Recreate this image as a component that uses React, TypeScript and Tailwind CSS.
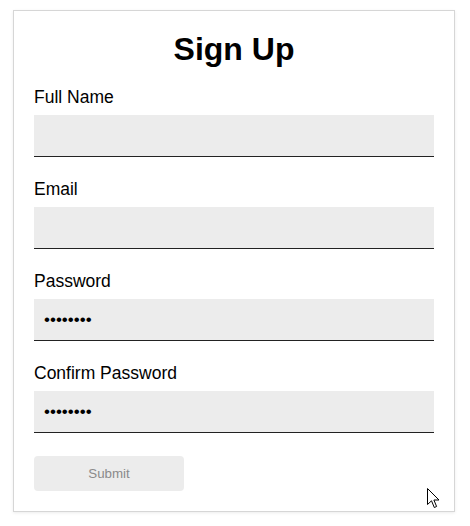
import React from "react";

const fields = [
    { label: "Full Name", type: "text", value: "" },
    { label: "Email", type: "email", value: "" },
    { label: "Password", type: "password", value: "12345678" },
    { label: "Confirm Password", type: "password", value: "12345678" },
];

export default function App() {
    return (
        <div className="relative min-h-[526px] w-[470px] bg-white pt-[10px] font-['Liberation_Sans',Arial,sans-serif] text-black">
            <form className="ml-[13px] w-[442px] border border-[#d6d6d6] bg-white px-[20px] pt-[20px] pb-[20px] shadow-[0_1px_3px_rgba(0,0,0,0.08)]">
                <h1 className="text-center text-[32px] font-bold leading-[37px]">Sign Up</h1>
                <div className="mt-[19px] flex flex-col gap-[22px]">
                    {fields.map((f) => (
                        <div key={f.label} className="flex flex-col">
                            <label className="text-[17.5px] leading-[21px]">{f.label}</label>
                            <input
                                type={f.type}
                                defaultValue={f.value}
                                className="mt-[7px] h-[42px] w-full border-b border-[#222] bg-[#ececec] px-[10px] text-[17px] outline-none"
                            />
                        </div>
                    ))}
                </div>
                <button
                    type="button"
                    disabled
                    className="mt-[23px] h-[35px] w-[150px] rounded-[4px] bg-[#ececec] text-[13.33px] text-[#8a8a8a]"
                >
                    Submit
                </button>
            </form>
            <svg
                className="absolute left-[427px] top-[488px]"
                width="14"
                height="21"
                viewBox="0 0 14 21"
            >
                <path
                    d="M0.5 0.5 L0.5 16.5 L4.5 12.8 L7.3 19.5 L9.6 18.5 L6.9 12 L12 12 Z"
                    fill="white"
                    stroke="black"
                    strokeWidth="1"
                    strokeLinejoin="miter"
                />
            </svg>
        </div>
    );
}
